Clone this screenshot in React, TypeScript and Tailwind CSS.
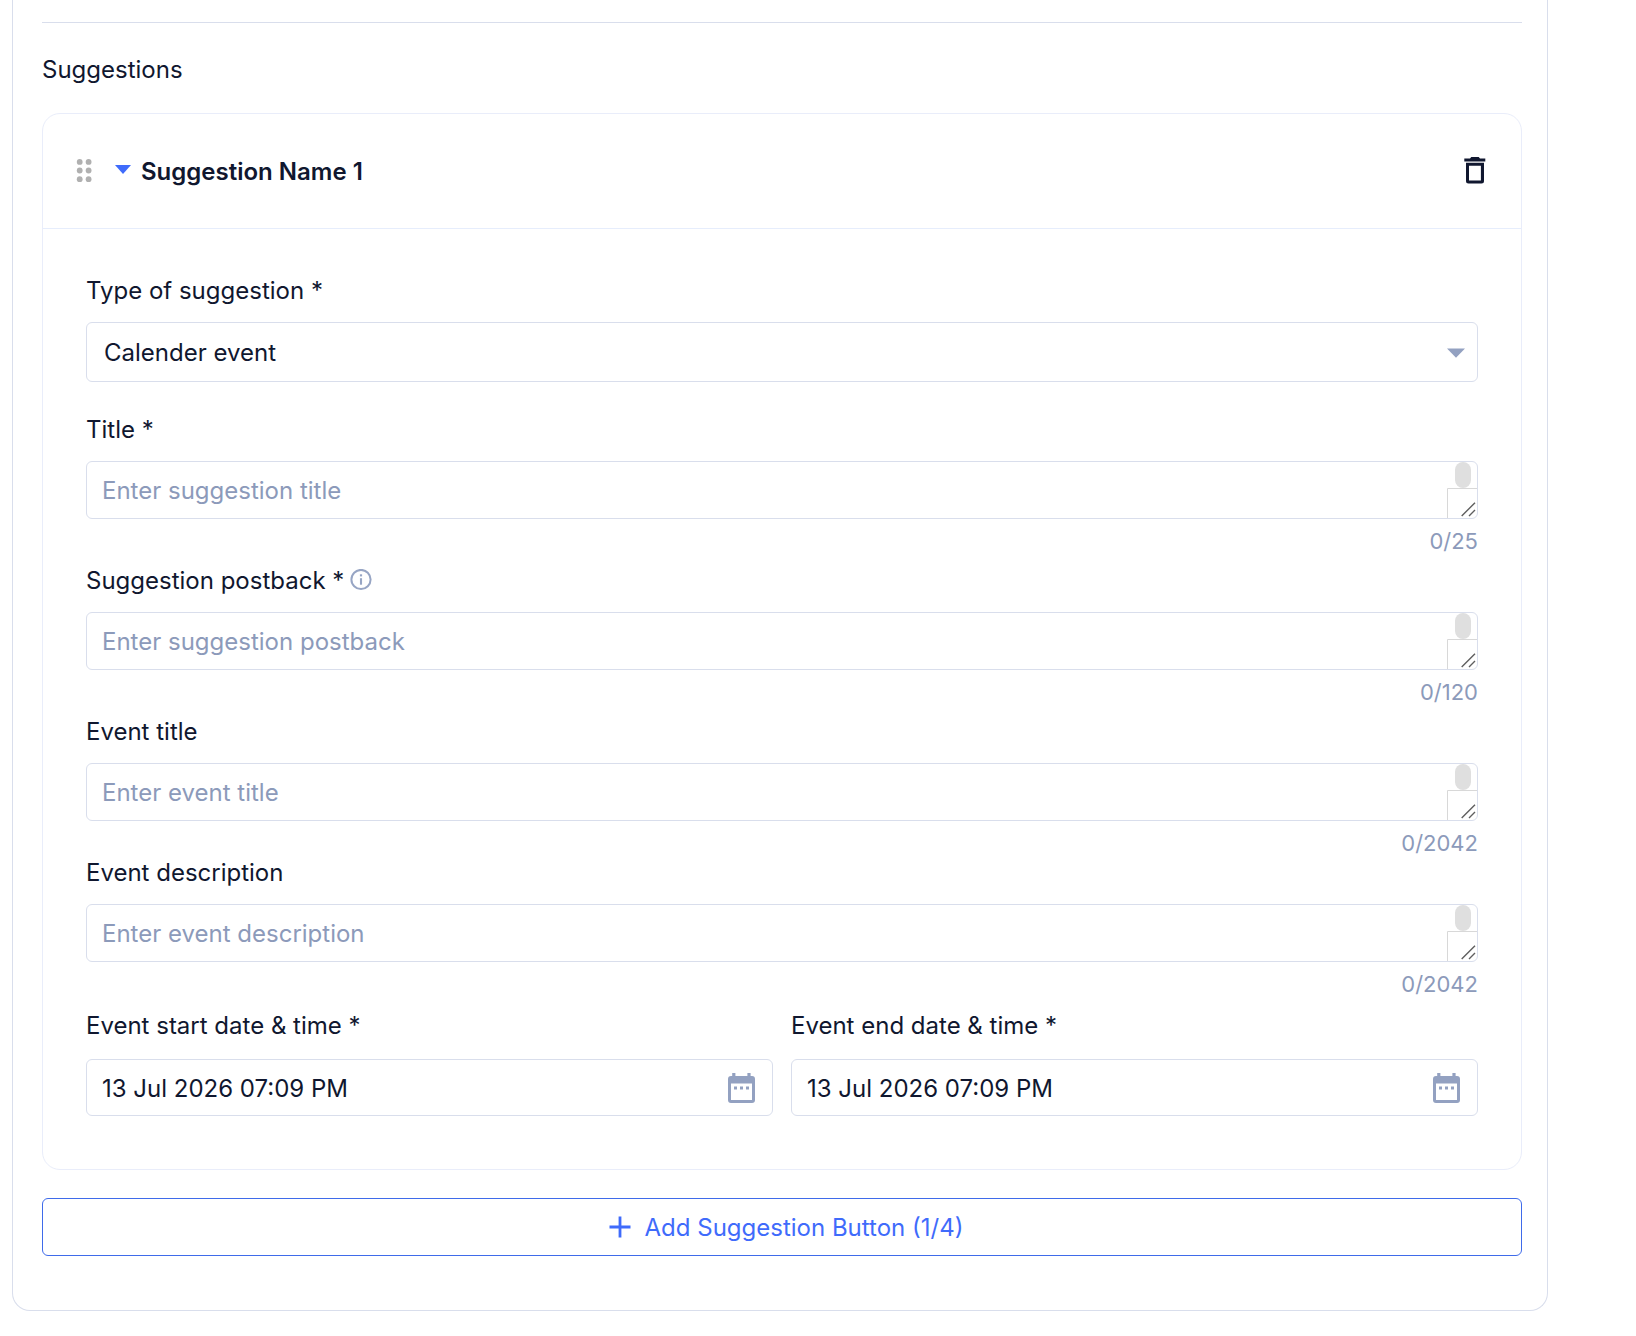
import React from "react";

type CountedFieldProps = {
  id: string;
  label: string;
  placeholder: string;
  limit: number;
  info?: boolean;
  className?: string;
};

const labelClass = "flex h-8 items-center pt-0.5 text-2xl leading-8 whitespace-nowrap";
const boxClass = "w-full rounded-md border border-[#d9deec] bg-white";

function InfoIcon() {
  return (
    <svg width="22" height="22" viewBox="0 0 22 22" fill="none" stroke="#97a5c4" aria-hidden="true">
      <circle cx="11" cy="10.500" r="9.6" strokeWidth="2" />
      <path d="M11 9.2V15.700" strokeWidth="2.100" />
      <path d="M11 5.3V7.400" strokeWidth="2.2" />
    </svg>
  );
}

function CalendarIcon() {
  return (
    <svg width="27" height="30" viewBox="0 0 27 30" fill="#93a1c1" aria-hidden="true">
      <path
        fillRule="evenodd"
        d="M4.2 0h3.2v3h12V0h3.2v3H24a3 3 0 0 1 3 3v21a3 3 0 0 1-3 3H3a3 3 0 0 1-3-3V6a3 3 0 0 1 3-3h1.200zM3 10.500V27h21V10.500z"
      />
      <path d="M6 13.500h3v3H6zM12 13.500h3v3h-3zM18 13.500h3v3h-3z" />
    </svg>
  );
}

function TrashIcon() {
  return (
    <svg width="22" height="28" viewBox="0 0.5 22 28" fill="#10172f" aria-hidden="true">
      <path d="M0.300 2H6l1.300-1.500h7.400L16 2h5.300v3H.300z" />
      <path fillRule="evenodd" d="M2 6.200h18V24.500a2.500 2.500 0 0 1-2.500 2.500h-13A2.500 2.500 0 0 1 2 24.500zM5 9.200v14.800h11.900V9.200z" />
    </svg>
  );
}

function CountedField({ id, label, placeholder, limit, info, className = "" }: CountedFieldProps) {
  return (
    <div className={className}>
      <div className="flex items-center gap-1.5">
        <label htmlFor={id} className={labelClass}>
          {label}
        </label>
        {info && (
          <button type="button" aria-label={`About ${label}`}>
            <InfoIcon />
          </button>
        )}
      </div>
      <div className="relative mt-4 flex">
        <textarea
          id={id}
          rows={1}
          placeholder={placeholder}
          className={`${boxClass} h-[58px] resize-none overflow-hidden pt-[13px] pr-9 pb-[11px] pl-[15px] text-2xl leading-8 placeholder:text-[#8c9aba]`}
        />
        <span className="absolute top-px right-[7px] h-[26px] w-4 rounded-full bg-[#dfdfdf]" />
        <svg className="absolute right-px bottom-px" width="30" height="30" viewBox="0 0 30 30" fill="none" aria-hidden="true">
          <path d="M.5 30V.5H30" stroke="#d8d8d8" />
          <path d="M14.700 28L28 14.700M22 28L28 22" stroke="#5f5f5f" strokeWidth="1.400" />
        </svg>
      </div>
      <div className="mt-[9px] text-right text-[22px] leading-[26px] text-[#8c9aba]">0/{limit}</div>
    </div>
  );
}

function DateField({ id, label }: { id: string; label: string }) {
  return (
    <div className="flex-1">
      <label htmlFor={id} className={labelClass}>
        {label}
      </label>
      <div className={`${boxClass} mt-[18px] flex h-[57px] items-center pr-[17px] pl-[15px]`}>
        <input id={id} defaultValue="13 Jul 2026 07:09 PM" className="min-w-0 flex-1 pt-0.5 text-2xl leading-8 outline-none" />
        <button type="button" aria-label={`Pick ${label}`}>
          <CalendarIcon />
        </button>
      </div>
    </div>
  );
}

export default function App() {
  return (
    <main className="bg-white pr-[88px] pb-[25px] pl-3 font-['Inter',sans-serif] text-[#10172f]">
      <section className="rounded-b-[18px] border border-t-0 border-[#d9deec] pt-[22px] pr-[25px] pb-[54px] pl-[29px]">
        <hr className="border-[#d9deec]" />
        <h2 className="mt-[31px] text-2xl leading-8">Suggestions</h2>

        <article className="mt-[27px] rounded-[18px] border border-[#e9edfa]">
          <header className="flex h-[115px] items-center border-b border-[#e6edfc] pr-[35px] pl-[33px]">
            <svg width="16" height="24" viewBox="0 0 16 24" fill="#b0b0b0" aria-hidden="true">
              <circle cx="3.700" cy="2.900" r="2.900" />
              <circle cx="12.600" cy="2.900" r="2.900" />
              <circle cx="3.700" cy="11.500" r="2.900" />
              <circle cx="12.600" cy="11.500" r="2.900" />
              <circle cx="3.700" cy="20.200" r="2.900" />
              <circle cx="12.600" cy="20.200" r="2.900" />
            </svg>
            <button type="button" className="ml-[23px] flex items-center gap-2.5 text-2xl leading-8 font-semibold">
              <svg width="16" height="12" viewBox="0 0 16 12" fill="#3f6bfb" aria-hidden="true">
                <path d="M0 0h16L8 9z" />
              </svg>
              <span className="pt-0.5">Suggestion Name 1</span>
            </button>
            <button type="button" aria-label="Delete suggestion" className="ml-auto">
              <TrashIcon />
            </button>
          </header>

          <div className="px-[43px] pt-[45px] pb-[53px]">
            <label htmlFor="type" className={labelClass}>
              Type of suggestion *
            </label>
            <div className="relative mt-4">
              <select id="type" className={`${boxClass} block h-[60px] appearance-none pt-0.5 pr-12 pl-[17px] text-2xl leading-8`}>
                <option>Calender event</option>
              </select>
              <svg
                className="pointer-events-none absolute top-[26px] right-[13px]"
                width="18"
                height="10"
                viewBox="0 0 18 10"
                fill="#93a1c1"
                aria-hidden="true"
              >
                <path d="M0 .5h18L9 9.700z" />
              </svg>
            </div>

            <CountedField className="mt-[31px]" id="title" label="Title *" placeholder="Enter suggestion title" limit={25} />
            <CountedField
              className="mt-2.5"
              id="postback"
              label="Suggestion postback *"
              placeholder="Enter suggestion postback"
              limit={120}
              info
            />
            <CountedField className="mt-2.5" id="event-title" label="Event title" placeholder="Enter event title" limit={2042} />
            <CountedField
              id="event-description"
              label="Event description"
              placeholder="Enter event description"
              limit={2042}
            />
            <div className="mt-3 flex gap-[18px]">
              <DateField id="start" label="Event start date & time *" />
              <DateField id="end" label="Event end date & time *" />
            </div>
          </div>
        </article>

        <button
          type="button"
          className="mt-7 flex h-[58px] w-full items-center justify-center gap-3.5 rounded-md border border-[#3f6bea] pl-2 text-2xl leading-8 text-[#3f6bfb]"
        >
          <svg width="22" height="22" viewBox="0 0 22 22" stroke="#3f6bfb" strokeWidth="2.800" aria-hidden="true">
            <path d="M11 0.500V21.500M0.500 11H21.500" />
          </svg>
          <span className="pt-0.5">Add Suggestion Button (1/4)</span>
        </button>
      </section>
    </main>
  );
}
